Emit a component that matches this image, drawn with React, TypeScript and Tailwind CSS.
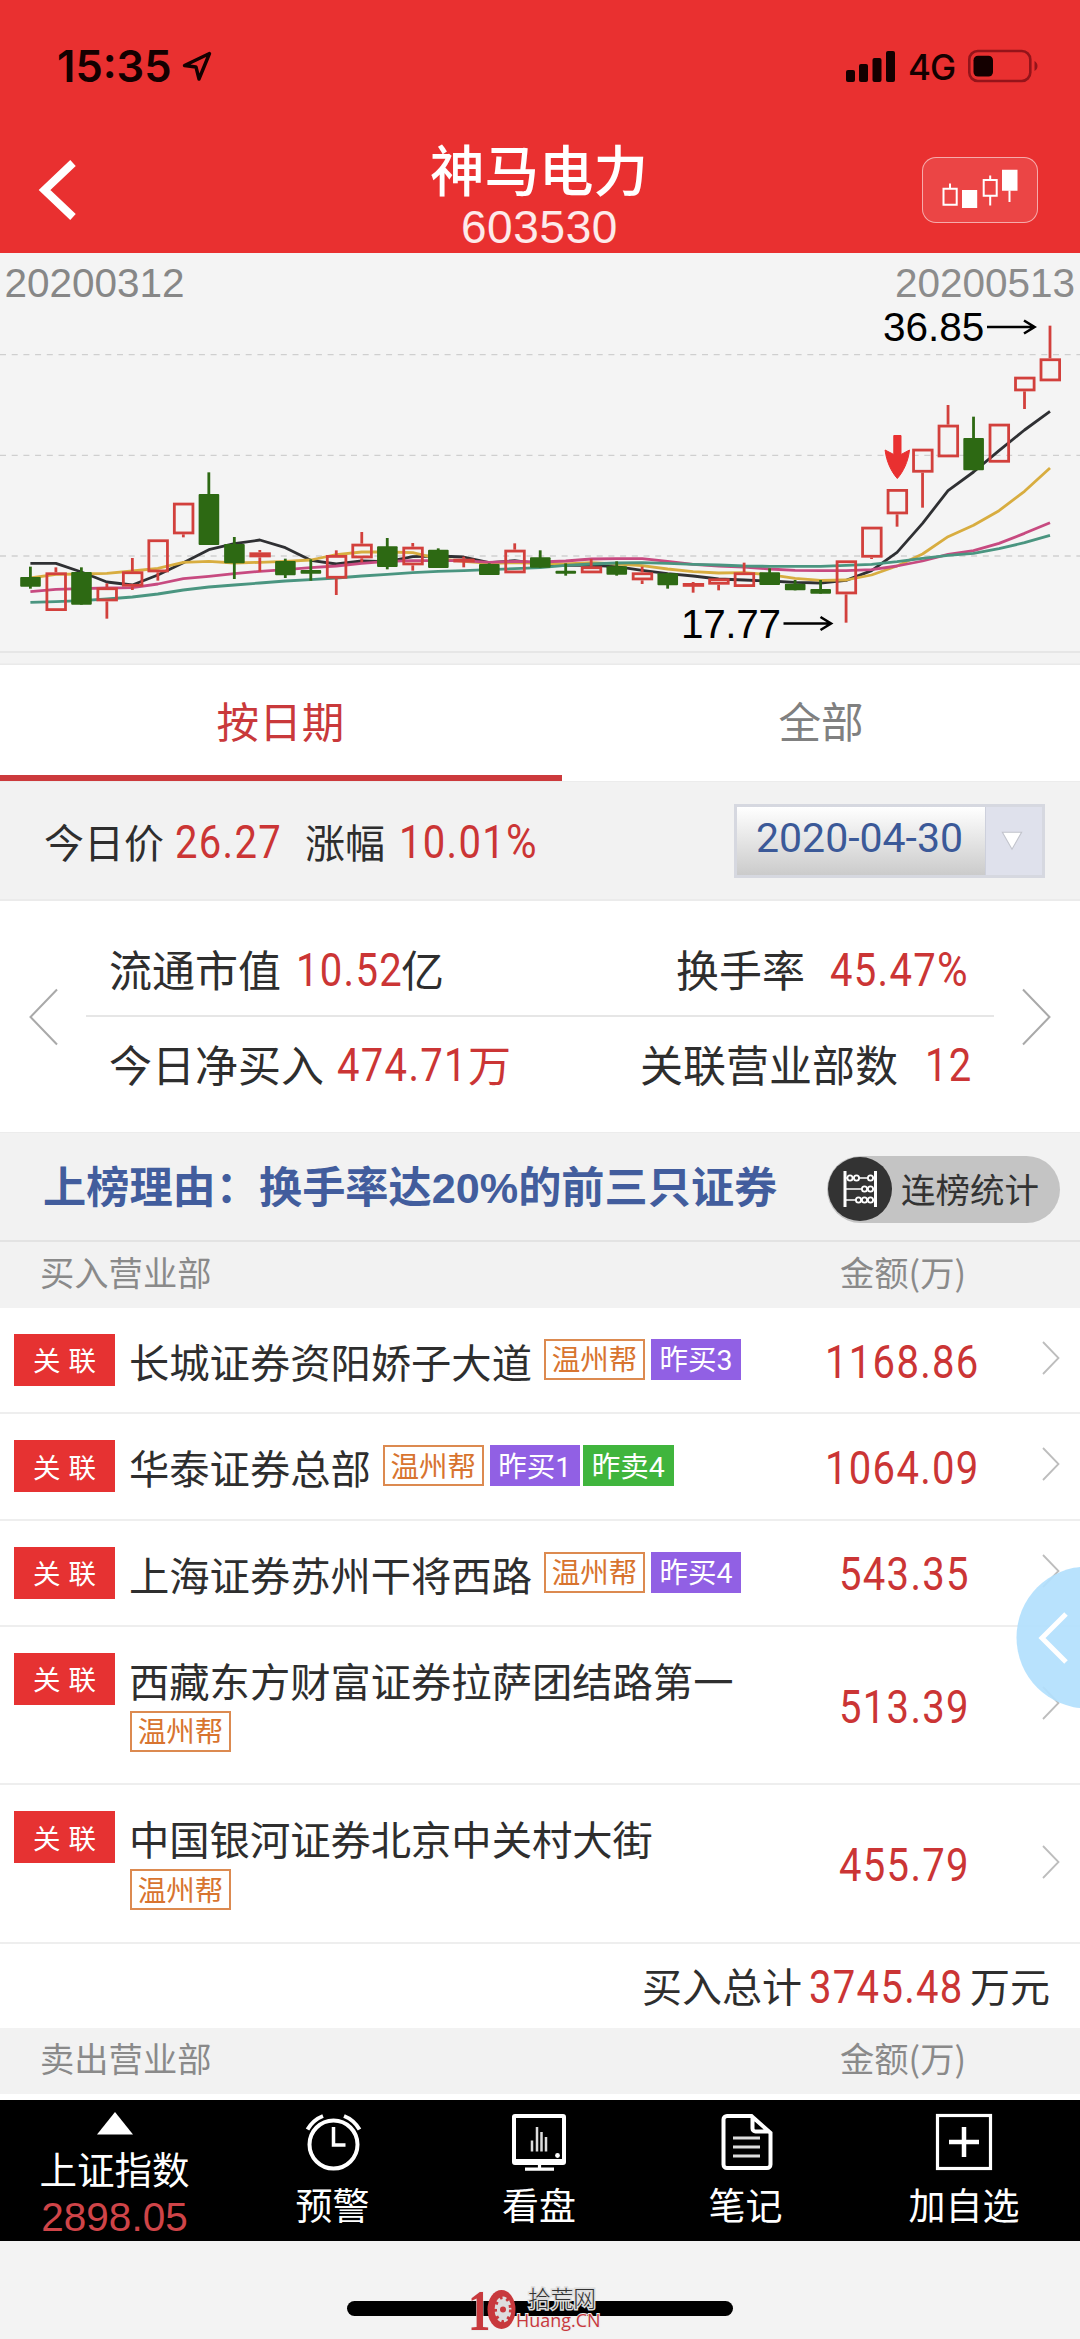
import React from "react";

type Candle = [kind: "r" | "g", high: number, top: number, bottom: number, low: number];

// Values are in chart units: three units to a pixel, measured from the chart's origin.
const candles: Candle[] = [
  ["g", 950, 981, 1010, 1016], ["r", 952, 967, 1083, 1083], ["g", 952, 966, 1064, 1064],
  ["r", 1000, 1012, 1054, 1106], ["r", 924, 964, 1010, 1020], ["r", 868, 868, 967, 992],
  ["r", 758, 758, 853, 862], ["g", 667, 732, 885, 885], ["g", 861, 882, 940, 987],
  ["r", 900, 907, 922, 965], ["g", 926, 933, 976, 984], ["g", 928, 960, 971, 992],
  ["r", 901, 915, 986, 1035], ["r", 846, 881, 925, 937], ["g", 864, 889, 951, 958],
  ["r", 879, 890, 946, 962], ["g", 895, 899, 954, 954], ["r", 920, 926, 936, 952],
  ["g", 940, 942, 975, 975], ["r", 880, 899, 970, 970], ["g", 901, 922, 953, 953],
  ["g", 940, 962, 971, 977], ["r", 927, 949, 970, 970], ["g", 934, 949, 974, 977],
  ["r", 950, 967, 991, 1002], ["g", 969, 970, 1006, 1016], ["r", 996, 999, 1008, 1028],
  ["r", 984, 985, 1004, 1021], ["r", 938, 967, 1011, 1011], ["g", 955, 967, 1005, 1005],
  ["g", 990, 1001, 1021, 1021], ["g", 990, 1017, 1031, 1031], ["r", 931, 931, 1033, 1118],
  ["r", 830, 830, 923, 927], ["r", 717, 717, 793, 830], ["r", 596, 596, 668, 773],
  ["r", 465, 524, 622, 622], ["g", 500, 564, 661, 661], ["r", 521, 521, 638, 638],
  ["r", 380, 380, 424, 477], ["r", 227, 325, 394, 394],
];

const averages: { color: string; values: number[] }[] = [
  { color: "#2f3033", values: [940, 940, 966, 996, 1005, 975, 938, 899, 881, 870, 893, 931, 942, 933, 935, 920, 918, 921, 938, 932, 942, 946, 946, 950, 961, 971, 978, 987, 990, 993, 997, 999, 991, 962, 907, 820, 722, 666, 602, 540, 484] },
  { color: "#d8ad40", values: [984, 973, 972, 970, 963, 955, 937, 934, 939, 937, 934, 930, 914, 906, 906, 908, 926, 934, 940, 938, 940, 942, 938, 942, 947, 957, 965, 969, 968, 974, 985, 991, 990, 975, 948, 912, 860, 826, 782, 724, 654] },
  { color: "#c74a80", values: [1025, 1018, 1016, 1014, 1013, 1002, 986, 979, 971, 964, 959, 953, 948, 940, 934, 932, 932, 932, 937, 934, 936, 933, 927, 926, 926, 934, 943, 948, 951, 957, 961, 962, 962, 959, 948, 933, 913, 902, 880, 850, 818] },
  { color: "#4a9580", values: [1057, 1055, 1052, 1047, 1041, 1032, 1020, 1011, 1005, 999, 993, 989, 984, 978, 973, 968, 964, 962, 959, 956, 953, 946, 942, 939, 938, 940, 943, 945, 948, 949, 949, 949, 946, 943, 935, 925, 916, 910, 896, 878, 856] },
];

const cx = (i: number) => 30.4 + i * 25.49;
const cy = (v: number) => 250 + v / 3;

function KLineChart() {
  return (
    <svg className="block h-[412px] w-[1080px] shrink-0 bg-[#f4f4f4]" viewBox="0 253 1080 412">
      {[354.7, 455.3, 556].map((y) => (
        <line key={y} x1="0" x2="1080" y1={y} y2={y} stroke="#cfcfcf" strokeWidth="1.3" strokeDasharray="6 5.7" />
      ))}
      <rect x="0" y="651" width="1080" height="2" fill="#e6e6e6" />
      <rect x="0" y="653" width="1080" height="12" fill="#f3f3f3" />
      <rect x="0" y="663.5" width="1080" height="1.5" fill="#eaeaea" />
      {averages.map((a) => (
        <polyline
          key={a.color}
          fill="none"
          stroke={a.color}
          strokeWidth="2.8"
          strokeLinejoin="round"
          points={a.values.map((v, i) => `${cx(i)},${cy(v)}`).join(" ")}
        />
      ))}
      {candles.map(([kind, high, top, bottom, low], i) => {
        const x = cx(i);
        if (kind === "g") {
          return (
            <g key={i} fill="#2d6913">
              <rect x={x - 1.4} y={cy(high)} width="2.8" height={(low - high) / 3} />
              <rect x={x - 10.2} y={cy(top)} width="20.6" height={(bottom - top) / 3} rx="1" />
            </g>
          );
        }
        return (
          <g key={i} stroke="#d2403c" strokeWidth="2.8" fill="none">
            {top > high && <line x1={x} x2={x} y1={cy(high)} y2={cy(top)} />}
            {low > bottom && <line x1={x} x2={x} y1={cy(bottom)} y2={cy(low)} />}
            <rect x={x - 9} y={cy(top) + 1.4} width="18.6" height={Math.max((bottom - top) / 3 - 2.8, 1)} />
          </g>
        );
      })}
      <path d="M893.8 435.500h7.200v19l8.500-4.500c-1.200 11.500-6.400 22-12.200 28.500c-5.800-6.500-11-17-12.200-28.500l8.700 4.500z" fill="#e93030" stroke="#e93030" />
      <g fontFamily="Liberation Sans, Arial, sans-serif" fontSize="40.500">
        <text x="4.500" y="296.500" fill="#878787" textLength="180">20200312</text>
        <text x="895" y="296.500" fill="#8c8c8c" textLength="180">20200513</text>
        <text x="883" y="341" fill="#000">36.85</text>
        <text x="681" y="637.500" fill="#000" textLength="100">17.77</text>
      </g>
      <g fill="none" stroke="#000" strokeWidth="2.600">
        <path d="M987 327h47M1024 320.500l10.500 6.500l-10.500 6.500" />
        <path d="M783.500 623.500h47M820.500 617l10.500 6.500l-10.500 6.500" />
      </g>
    </svg>
  );
}

function Num({ children, className = "" }: { children: React.ReactNode; className?: string }) {
  return (
    <span className={`inline-block shrink-0 origin-left scale-x-[0.87] whitespace-nowrap pt-[3px] font-[Roboto] text-[46px] leading-[54px] tracking-[1.5px] text-[#cb3535] ${className}`}>
      {children}
    </span>
  );
}

function StatusBar() {
  return (
    <div className="flex h-[132px] items-center pl-[57px] pr-[41px] text-[#140000]">
      <span className="w-[120px] pt-[1px] font-[Inter] text-[43.500px] font-semibold leading-none">15:35</span>
      <svg className="ml-[4px] h-[32px] w-[32px]" viewBox="0 0 32 32" fill="none" stroke="currentColor" strokeWidth="3.400" strokeLinejoin="round">
        <path d="M28.500 3.500L3.500 15.500l11.500 1.500L18 29z" />
      </svg>
      <div className="flex-1" />
      <svg className="h-[34px] w-[52px]" viewBox="0 0 52 34" fill="currentColor">
        <rect x="2" y="21" width="9" height="12" rx="2" />
        <rect x="15" y="15" width="9" height="18" rx="2" />
        <rect x="28.500" y="9" width="9" height="24" rx="2" />
        <rect x="42" y="2" width="9" height="31" rx="2" />
      </svg>
      <span className="ml-[12px] w-[59px] pt-[2px] font-[Inter] text-[35px] font-medium leading-none tracking-[-1px]">4G</span>
      <svg className="h-[34px] w-[72px]" viewBox="0 0 72 34">
        <rect x="2.300" y="2" width="61" height="30" rx="8.500" fill="none" stroke="#94141a" strokeWidth="2.600" />
        <rect x="6.500" y="6.800" width="19.500" height="20.700" rx="4.500" fill="#140000" />
        <path d="M67.500 12c4 2 4 8 0 10z" fill="#94141a" />
      </svg>
    </div>
  );
}

function Header() {
  return (
    <header className="h-[253px] bg-[#e93030]">
      <StatusBar />
      <div className="flex h-[121px] justify-between">
        <svg className="ml-[36px] mt-[26px] h-[64px] w-[160px]" viewBox="0 0 160 64" fill="none" stroke="#fff" strokeWidth="8">
          <path d="M37 5L8.500 32L37 59" />
        </svg>
        <div className="flex flex-col items-center pr-[2px] text-white">
          <h1 className="mt-[5px] text-[54.500px] font-medium leading-[62px]">神马电力</h1>
          <span className="mt-[2px] pl-[1px] font-['Liberation_Sans'] text-[46px] leading-[52px] tracking-[0.6px] text-white/90">603530</span>
        </div>
        <div className="ml-[38px] mr-[42px] mt-[25px] h-[66px] w-[116px] rounded-[14px] border-[1.500px] border-white/55 bg-white/10">
          <svg className="h-[63px] w-[113px]" viewBox="924 158.500 113 63" fill="none" stroke="#fff" strokeWidth="2">
            <path d="M944.500 189.300h13.200v15.900h-13.200zM951 184v5M984.700 180.500h13v15.800h-13zM991.200 176v4.500M991.200 196.300v9.700M970.800 191v5M1010.500 191v11.500" />
            <path d="M963 190.500h15.200v18H963zM1003 170.200h15.500v21H1003z" fill="#fff" stroke="none" />
          </svg>
        </div>
      </div>
    </header>
  );
}

function Tabs() {
  return (
    <div className="flex h-[117px] border-b border-[#ececec] bg-white text-[42.600px]">
      <div className="flex w-[562px] flex-col text-[#c9393b]">
        <span className="flex h-[110px] items-center justify-center pr-[1px] leading-none">按日期</span>
        <span className="h-[6px] w-full bg-[#cc3a3c]" />
      </div>
      <div className="flex h-[110px] flex-1 items-center justify-center leading-none text-[#808080]">全部</div>
    </div>
  );
}

function QuoteBar() {
  return (
    <div className="flex h-[119px] items-center border-b-2 border-[#ebebeb] bg-[#f2f2f2] pl-[44px] text-[40px] leading-none text-[#2e2e2e]">
      <span className="w-[131px]">今日价</span>
      <Num className="w-[130px]">26.27</Num>
      <span className="w-[94px]">涨幅</span>
      <Num className="w-[336px]">10.01<span className="text-[48px]">%</span></Num>
      <div className="flex h-[74px] w-[311px] -translate-x-[1px] border-[3px] border-[#d6d8e0]">
        <span className="flex h-full w-[248px] items-center bg-gradient-to-b from-white to-[#cbcbcb] pb-[4px] pl-[19px] font-[Roboto] text-[41px] text-[#3b5998]">2020-04-30</span>
        <span className="flex flex-1 items-center justify-center border-l border-[#cdd0dc] bg-[#dfe1ec] pr-[4px]">
          <svg className="h-[22px] w-[22px]" viewBox="0 0 24 22" fill="#fff" stroke="#c2c4cc" strokeWidth="1.200">
            <path d="M1.500 1.500h21L12 20z" />
          </svg>
        </span>
      </div>
    </div>
  );
}

function SideChevron({ flip = false }: { flip?: boolean }) {
  return (
    <svg className={flip ? "h-[58px] w-[30px] shrink-0 -scale-x-100" : "h-[58px] w-[30px] shrink-0"} viewBox="0 0 30 58" fill="none" stroke="#a9a9a9" strokeWidth="2">
      <path d="M28 1.500L1.500 29L28 56.500" />
    </svg>
  );
}

function Stats() {
  return (
    <div className="flex h-[232px] items-center border-b border-[#ececec] bg-white px-[29px] text-[43px] leading-none text-[#2e2e2e]">
      <SideChevron />
      <div className="flex flex-1 flex-col px-[27px]">
        <div className="flex h-[96px] items-center border-b-2 border-[#e6e6e6] pl-[23px] pt-[2px]">
          <span className="w-[187px]">流通市值</span>
          <Num className="w-[105px]">10.52</Num>
          <span className="flex-1">亿</span>
          <span className="w-[154px]">换手率</span>
          <Num className="w-[164px]">45.47<span className="text-[48px]">%</span></Num>
        </div>
        <div className="flex h-[96px] items-center pb-[2px] pl-[23px]">
          <span className="w-[228px]">今日净买入</span>
          <Num className="w-[131px]">474.71</Num>
          <span className="flex-1 text-[#cb3535]">万</span>
          <span className="w-[285px]">关联营业部数</span>
          <Num className="w-[69px]">12</Num>
        </div>
      </div>
      <SideChevron flip />
    </div>
  );
}

function ReasonBar() {
  return (
    <div className="flex h-[109px] items-center border-b-2 border-[#e3e3e3] bg-[#f2f2f2] pl-[43px] leading-none">
      <span className="w-[784px] shrink-0 whitespace-nowrap pt-[5px] font-['Liberation_Sans','Noto_Sans_CJK_SC',sans-serif] text-[43.200px] font-bold text-[#425d9d]">上榜理由：换手率达20%的前三只证券</span>
      <div className="mt-[5px] flex h-[67px] w-[233px] items-center rounded-full bg-[#c4c4c4] pl-[1px] text-[34.500px] text-[#333]">
        <svg className="mr-[9px] h-[64px] w-[64px]" viewBox="0 0 64 64" fill="none" stroke="#fff" strokeWidth="2">
          <circle cx="32" cy="32" r="32" fill="#333" stroke="none" />
          <path d="M17 14v36M47.500 14v36" strokeWidth="3" />
          <path d="M17 21h30M17 32h30M17 43h30" strokeWidth="1.500" />
          <g fill="#333" strokeWidth="1.800">
            {[[22, 21], [28.5, 21], [42.5, 21], [36.5, 32], [42.5, 32], [30.5, 43], [36.5, 43], [42.5, 43]].map(([x, y]) => (
              <circle key={`${x}-${y}`} cx={x} cy={y} r="2.600" />
            ))}
          </g>
        </svg>
        <span className="pb-[1px]">连榜统计</span>
      </div>
    </div>
  );
}

function ColumnHead({ label }: { label: string }) {
  return (
    <div className="flex h-[66px] items-center bg-[#f2f2f2] pb-[7px] pl-[40px] text-[34.300px] leading-none text-[#8a8a8a]">
      <span className="w-[800px]">{label}</span>
      <span>金额(万)</span>
    </div>
  );
}

type Tag = { text: string; tone: "group" | "buy" | "sell" };
type Branch = { name: string; amount: string; tags: Tag[]; wrapped?: boolean };

const group: Tag = { text: "温州帮", tone: "group" };

const branches: Branch[] = [
  { name: "长城证券资阳娇子大道", amount: "1168.86", tags: [group, { text: "昨买3", tone: "buy" }] },
  { name: "华泰证券总部", amount: "1064.09", tags: [group, { text: "昨买1", tone: "buy" }, { text: "昨卖4", tone: "sell" }] },
  { name: "上海证券苏州干将西路", amount: "543.35", tags: [group, { text: "昨买4", tone: "buy" }] },
  { name: "西藏东方财富证券拉萨团结路第一", amount: "513.39", tags: [group], wrapped: true },
  { name: "中国银河证券北京中关村大街", amount: "455.79", tags: [group], wrapped: true },
];

const tagTone = {
  group: "mr-[6px] w-[101px] border-2 border-[#dc8a50] text-[#d8742f]",
  buy: "mr-[3px] w-[90px] bg-[#9160e4] text-white",
  sell: "w-[91px] bg-[#40b53d] text-white",
};

function TagChip({ tag }: { tag: Tag }) {
  return (
    <span className={`flex h-[41px] shrink-0 items-center justify-center pt-[4px] font-[Roboto,'Noto_Sans_CJK_SC',sans-serif] text-[28.500px] leading-none ${tagTone[tag.tone]}`}>
      {tag.text}
    </span>
  );
}

function BranchRow({ branch }: { branch: Branch }) {
  const { name, amount, tags, wrapped } = branch;
  return (
    <div className={`flex border-b-2 border-[#eeeeee] bg-white pl-[14px] ${wrapped ? "h-[158.500px]" : "h-[106.300px]"}`}>
      <span className="mt-[26px] flex h-[52px] w-[101px] shrink-0 items-center justify-center gap-[8px] bg-[#e63232] text-[27.500px] leading-none text-white">
        <span>关</span>
        <span>联</span>
      </span>
      <div className="ml-[14px] w-[674px] shrink-0">
        <div className="flex pt-[31px]">
          <span className="h-[44px] whitespace-nowrap text-[40.300px] leading-[44px] text-[#2e2e2e]">{name}</span>
          {!wrapped && (
            <span className="ml-[12px] flex">
              {tags.map((t) => <TagChip key={t.text} tag={t} />)}
            </span>
          )}
        </div>
        {wrapped && (
          <div className="mt-[9px] flex pl-[1px]">
            {tags.map((t) => <TagChip key={t.text} tag={t} />)}
          </div>
        )}
      </div>
      <div className="ml-[11px] flex w-[200px] items-center justify-center">
        <Num className="origin-center">{amount}</Num>
      </div>
      <div className="ml-[27px] flex items-center pb-[4px]">
        <svg className="h-[36px] w-[20px]" viewBox="0 0 20 36" fill="none" stroke="#bdbdbd" strokeWidth="1.800">
          <path d="M2 2L17.500 18L2 34" />
        </svg>
      </div>
    </div>
  );
}

function NavItem({ icon, label, className }: { icon: React.ReactNode; label: string; className: string }) {
  return (
    <div className={`flex flex-col items-center pt-[13px] ${className}`}>
      <svg className="h-[58px] w-[60px]" viewBox="0 0 60 58" fill="none" stroke="#fff" strokeWidth="4">
        {icon}
      </svg>
      <span className="mt-[13px] whitespace-nowrap text-[37px] leading-[40px] text-white">{label}</span>
    </div>
  );
}

function BottomNav() {
  return (
    <nav className="flex h-[141px] bg-black">
      <div className="flex w-[229px] flex-col items-center pt-[12px]">
        <svg className="h-[23px] w-[38px]" viewBox="0 0 38 23" fill="#fff">
          <path d="M19 0L37 22.500H1z" />
        </svg>
        <span className="mt-[13px] text-[37.500px] leading-[40px] text-white">上证指数</span>
        <span className="mt-[9px] font-['Liberation_Sans'] text-[40.500px] leading-[40px] text-[#cf4448]">2898.05</span>
      </div>
      <NavItem
        className="w-[207px]"
        label="预警"
        icon={
          <>
            <circle cx="30.500" cy="31.500" r="24" />
            <path d="M30.500 14v18h12" strokeWidth="3.500" />
            <path d="M4.500 16.500C8 10.500 13.500 5.500 20 3M41 3c6.500 2.500 12 7.500 15.500 13.500" />
          </>
        }
      />
      <NavItem
        className="w-[206px]"
        label="看盘"
        icon={
          <>
            <rect x="5" y="3" width="50" height="47" rx="1" />
            <path d="M4 48.500h52" strokeWidth="5" />
            <path d="M30.500 50v6M16 56.200h29" strokeWidth="3.200" />
            <path d="M23 27.500v11M28 14v24.500M32.500 19v19.500M37 24v14.500" strokeWidth="2.500" stroke="#ddd" />
            <circle cx="48.500" cy="42.500" r="2.400" fill="#fff" stroke="none" />
          </>
        }
      />
      <NavItem
        className="w-[207px]"
        label="笔记"
        icon={
          <>
            <path d="M35.500 3H11a3.500 3.500 0 0 0-3.500 3.500v45A3.500 3.500 0 0 0 11 55h40a3.500 3.500 0 0 0 3.500-3.500V20zM36.500 3v12.500a3 3 0 0 0 3 3H54" />
            <path d="M17 25h27M17 34h27M17 43h27" strokeWidth="3.200" stroke="#ddd" />
          </>
        }
      />
      <NavItem
        className="w-[230px]"
        label="加自选"
        icon={
          <>
            <rect x="3.500" y="2.500" width="53" height="53" strokeWidth="3.200" />
            <path d="M15 29h30M30 14v30" strokeWidth="4.500" />
          </>
        }
      />
    </nav>
  );
}

function Watermark() {
  return (
    <div className="absolute left-[472px] top-[27px] flex h-[71px] text-[#c8393d]">
      <div className="mt-[21px] flex h-[46px] w-[44px]">
        <span className="w-[15px] shrink-0 origin-left scale-x-[0.8] font-['Liberation_Serif'] text-[56px] font-bold leading-[44px] [paint-order:stroke] [-webkit-text-stroke:1px_#e6e6e6]">
          <span className="-ml-[5px]">1</span>
        </span>
        <svg className="h-[46px] w-[29px] shrink-0" viewBox="15 0 29 46">
          <ellipse cx="29.500" cy="20.500" rx="14" ry="19.500" fill="#c8393d" />
          <ellipse cx="31" cy="20.500" rx="8.500" ry="13" fill="#ddd" />
          <ellipse cx="31" cy="20.500" rx="8" ry="12.500" fill="none" stroke="#c8393d" strokeWidth="4" strokeDasharray="3 4.500" />
          <circle cx="31" cy="20.500" r="3" fill="#c8393d" />
        </svg>
      </div>
      <div className="flex flex-col">
        <span className="ml-[12px] mt-[17px] text-[22.700px] font-light leading-[26px] text-[#333] [paint-order:stroke] [-webkit-text-stroke:3px_#dedede]">拾荒网</span>
        <span className="-mt-[3px] origin-left scale-x-[0.96] font-['Open_Sans'] text-[18.700px] leading-[24px] [paint-order:stroke] [-webkit-text-stroke:2px_#eee]">Huang.CN</span>
      </div>
    </div>
  );
}

export default function App() {
  return (
    <div className="relative flex h-[2339px] w-[1080px] flex-col overflow-hidden bg-white font-['Noto_Sans_CJK_SC',sans-serif]">
      <Header />
      <KLineChart />
      <Tabs />
      <QuoteBar />
      <Stats />
      <ReasonBar />
      <ColumnHead label="买入营业部" />
      {branches.map((b) => <BranchRow key={b.name} branch={b} />)}
      <div className="flex h-[84px] items-center justify-end bg-white pb-[1px] pr-[30px] text-[40px] leading-none text-[#2e2e2e]">
        <span>买入总计</span>
        <Num className="ml-[7px] w-[161px]">3745.48</Num>
        <span>万元</span>
      </div>
      <ColumnHead label="卖出营业部" />
      <div className="h-[6px] bg-white" />
      <BottomNav />
      <footer className="relative flex-1 bg-[#f3f3f3] pt-[60px]">
        <div className="mx-auto h-[15px] w-[386px] rounded-full bg-black" />
        <Watermark />
      </footer>
      <svg className="absolute left-[1016px] top-[1566px] h-[143px] w-[64px]" viewBox="0 0 64 143">
        <circle cx="71.500" cy="71.500" r="71" fill="#b2e0fd" fillOpacity=".92" />
        <path d="M50 48L26 72L50 96" fill="none" stroke="#fff" strokeWidth="5" />
      </svg>
    </div>
  );
}
